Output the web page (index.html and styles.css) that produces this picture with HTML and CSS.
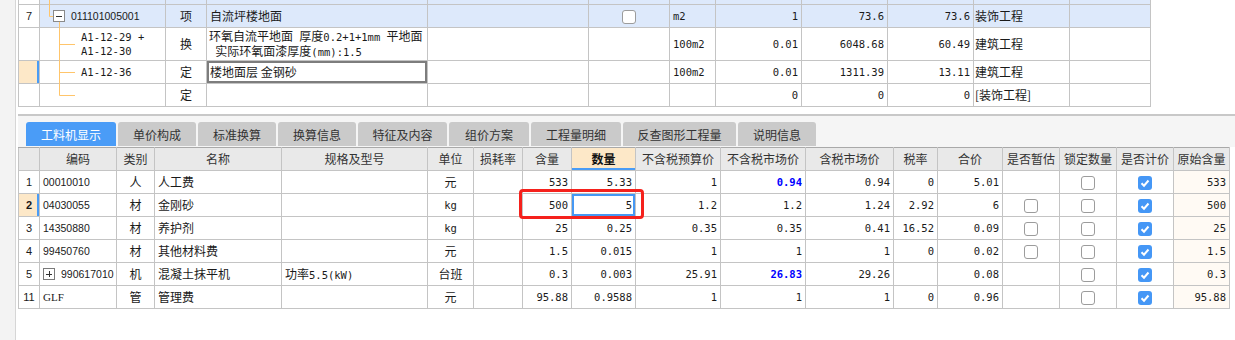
FILE: index.html
```html
<!DOCTYPE html>
<html>
<head>
<meta charset="utf-8">
<link rel="stylesheet" href="styles.css">
</head>
<body>
<div class="app">
  <div class="side"></div>
  <div class="main">
    <div class="top">
      <table class="grid tg">
        <colgroup>
          <col width="21"><col width="126"><col width="41"><col width="221"><col width="161"><col width="81"><col width="46"><col width="86"><col width="86"><col width="86"><col width="96"><col width="81">
        </colgroup>
        <tr class="r0">
          <td></td><td class="sel"></td><td class="sel"></td><td class="sel"></td><td class="sel"></td><td class="sel"></td><td class="sel"></td><td class="sel"></td><td class="sel"></td><td class="sel"></td><td class="sel"></td><td class="sel"></td>
        </tr>
        <tr class="r23">
          <td class="rn">7</td>
          <td class="sel code lv0">011101005001</td>
          <td class="sel c">项</td>
          <td class="sel">自流坪楼地面</td>
          <td class="sel"></td>
          <td class="sel c"><span class="cb"></span></td>
          <td class="sel m">m2</td>
          <td class="sel n">1</td>
          <td class="sel n">73.6</td>
          <td class="sel n">73.6</td>
          <td class="sel cat">装饰工程</td>
          <td class="sel"></td>
        </tr>
        <tr class="r33">
          <td class="rn"></td>
          <td class="m lv1">A1-12-29 +<br>A1-12-30</td>
          <td class="c">换</td>
          <td class="two">环氧自流平地面<span class="m"> </span>厚度<span class="m">0.2+1+1mm </span>平地面<br><span class="m">&nbsp;</span>实际环氧面漆厚度<span class="m">(mm):1.5</span></td>
          <td></td>
          <td></td>
          <td class="m">100m2</td>
          <td class="n">0.01</td>
          <td class="n">6048.68</td>
          <td class="n">60.49</td>
          <td class="cat">建筑工程</td>
          <td></td>
        </tr>
        <tr class="r23">
          <td class="rn cur"></td>
          <td class="m lv1">A1-12-36</td>
          <td class="c">定</td>
          <td class="edit">楼地面层 金钢砂</td>
          <td></td>
          <td></td>
          <td class="m">100m2</td>
          <td class="n">0.01</td>
          <td class="n">1311.39</td>
          <td class="n">13.11</td>
          <td class="cat">建筑工程</td>
          <td></td>
        </tr>
        <tr class="r23">
          <td class="rn"></td>
          <td></td>
          <td class="c">定</td>
          <td></td>
          <td></td>
          <td></td>
          <td></td>
          <td class="n">0</td>
          <td class="n">0</td>
          <td class="n">0</td>
          <td class="cat">[装饰工程]</td>
          <td></td>
        </tr>
      </table>
      <svg class="tree" width="70" height="100" viewBox="0 0 70 100">
        <g stroke="#ffc56b" stroke-width="1" fill="none">
          <path d="M31.5 0 V16.5 H35"/>
          <path d="M41.5 21.5 V95.5"/>
          <path d="M41.5 44.5 H57"/>
          <path d="M41.5 72.5 H57"/>
          <path d="M41.5 95.5 H57"/>
        </g>
        <rect x="35.5" y="10.5" width="11" height="11" fill="#fff" stroke="#8a8a8a"/>
        <path d="M38 16.5 H44" stroke="#333" stroke-width="1"/>
      </svg>
    </div>

    <div class="panel">
      <div class="tab on">工料机显示</div>
      <div class="tab w78">单价构成</div>
      <div class="tab w78">标准换算</div>
      <div class="tab w78">换算信息</div>
      <div class="tab w89">特征及内容</div>
      <div class="tab w80">组价方案</div>
      <div class="tab w90">工程量明细</div>
      <div class="tab w113">反查图形工程量</div>
      <div class="tab w78">说明信息</div>
    </div>

    <div class="bottom">
      <table class="grid bg">
        <colgroup>
          <col width="21"><col width="77"><col width="38"><col width="127"><col width="146"><col width="46"><col width="49"><col width="49"><col width="64"><col width="85"><col width="85"><col width="88"><col width="44"><col width="65"><col width="57"><col width="57"><col width="57"><col width="56">
        </colgroup>
        <tr class="hd">
          <td></td><td>编码</td><td>类别</td><td>名称</td><td>规格及型号</td><td>单位</td><td>损耗率</td><td>含量</td><td class="hq">数量</td><td>不含税预算价</td><td>不含税市场价</td><td>含税市场价</td><td>税率</td><td>合价</td><td>是否暂估</td><td>锁定数量</td><td>是否计价</td><td>原始含量</td>
        </tr>
        <tr class="r23">
          <td class="rn">1</td><td class="code">00010010</td><td class="c">人</td><td>人工费</td><td></td><td class="c">元</td><td></td>
          <td class="n">533</td><td class="n">5.33</td><td class="n">1</td><td class="n blue">0.94</td><td class="n">0.94</td><td class="n">0</td><td class="n">5.01</td>
          <td class="c"></td><td class="c"><span class="cb"></span></td><td class="c"><span class="cb on"><svg width="14" height="14" viewBox="0 0 14 14"><path d="M3.5 7.2 L6 9.7 L10.5 4.5" stroke="#fff" stroke-width="2" fill="none"/></svg></span></td><td class="n orig">533</td>
        </tr>
        <tr class="r23">
          <td class="rn cur b">2</td><td class="code">04030055</td><td class="c">材</td><td>金刚砂</td><td></td><td class="c m">kg</td><td></td>
          <td class="n">500</td><td class="n focus">5</td><td class="n">1.2</td><td class="n">1.2</td><td class="n">1.24</td><td class="n">2.92</td><td class="n">6</td>
          <td class="c"><span class="cb"></span></td><td class="c"><span class="cb"></span></td><td class="c"><span class="cb on"><svg width="14" height="14" viewBox="0 0 14 14"><path d="M3.5 7.2 L6 9.7 L10.5 4.5" stroke="#fff" stroke-width="2" fill="none"/></svg></span></td><td class="n orig">500</td>
        </tr>
        <tr class="r23">
          <td class="rn">3</td><td class="code">14350880</td><td class="c">材</td><td>养护剂</td><td></td><td class="c m">kg</td><td></td>
          <td class="n">25</td><td class="n">0.25</td><td class="n">0.35</td><td class="n">0.35</td><td class="n">0.41</td><td class="n">16.52</td><td class="n">0.09</td>
          <td class="c"><span class="cb"></span></td><td class="c"><span class="cb"></span></td><td class="c"><span class="cb on"><svg width="14" height="14" viewBox="0 0 14 14"><path d="M3.5 7.2 L6 9.7 L10.5 4.5" stroke="#fff" stroke-width="2" fill="none"/></svg></span></td><td class="n orig">25</td>
        </tr>
        <tr class="r23">
          <td class="rn">4</td><td class="code">99450760</td><td class="c">材</td><td>其他材料费</td><td></td><td class="c">元</td><td></td>
          <td class="n">1.5</td><td class="n">0.015</td><td class="n">1</td><td class="n">1</td><td class="n">1</td><td class="n">0</td><td class="n">0.02</td>
          <td class="c"><span class="cb"></span></td><td class="c"><span class="cb"></span></td><td class="c"><span class="cb on"><svg width="14" height="14" viewBox="0 0 14 14"><path d="M3.5 7.2 L6 9.7 L10.5 4.5" stroke="#fff" stroke-width="2" fill="none"/></svg></span></td><td class="n orig">1.5</td>
        </tr>
        <tr class="r23">
          <td class="rn">5</td><td class="code"><span class="pbox"></span>990617010</td><td class="c">机</td><td>混凝土抹平机</td><td>功率<span class="m">5.5(kW)</span></td><td class="c">台班</td><td></td>
          <td class="n">0.3</td><td class="n">0.003</td><td class="n">25.91</td><td class="n blue">26.83</td><td class="n">29.26</td><td class="n"></td><td class="n">0.08</td>
          <td class="c"></td><td class="c"><span class="cb"></span></td><td class="c"><span class="cb on"><svg width="14" height="14" viewBox="0 0 14 14"><path d="M3.5 7.2 L6 9.7 L10.5 4.5" stroke="#fff" stroke-width="2" fill="none"/></svg></span></td><td class="n orig">0.3</td>
        </tr>
        <tr class="r23">
          <td class="rn">11</td><td class="code serif">GLF</td><td class="c">管</td><td>管理费</td><td></td><td class="c">元</td><td></td>
          <td class="n">95.88</td><td class="n">0.9588</td><td class="n">1</td><td class="n">1</td><td class="n">1</td><td class="n">0</td><td class="n">0.96</td>
          <td class="c"></td><td class="c"><span class="cb"></span></td><td class="c"><span class="cb on"><svg width="14" height="14" viewBox="0 0 14 14"><path d="M3.5 7.2 L6 9.7 L10.5 4.5" stroke="#fff" stroke-width="2" fill="none"/></svg></span></td><td class="n orig">95.88</td>
        </tr>
      </table>
      <div class="hl"></div>
    </div>
  </div>
</div>
</body>
</html>
```

FILE: styles.css
```css
html, body {
  margin: 0;
  padding: 0;
  background: #fff;
}
.app {
  display: flex;
  width: 1235px;
  height: 340px;
  overflow: hidden;
}
.side {
  width: 15px;
  flex: none;
  background: #f3f3f3;
  border-right: 1px solid #d6d6d6;
}
.main {
  flex: 1;
  margin-left: 2px;
  display: flex;
  flex-direction: column;
}
.top {
  position: relative;
  height: 114px;
  border-bottom: 2px solid #c8c8c8;
}
.grid {
  border-collapse: collapse;
  table-layout: fixed;
  font-family: "Noto Sans CJK SC", sans-serif;
  font-size: 12px;
  color: #1a1a1a;
}
.tg { width: 1133px; }
.bg { width: 1212px; }
.grid td {
  border: 1px solid #c4c4c4;
  padding: 0 3px;
  white-space: nowrap;
  overflow: hidden;
  line-height: 14px;
  vertical-align: middle;
}
.tg tr.r0 td {
  border-top: none;
  height: 4px;
  padding: 0;
  font-size: 0;
  line-height: 0;
}
tr.r23 { height: 23px; }
tr.r33 { height: 33px; }
.sel { background: #dde9fb; }
.c { text-align: center; }
.n {
  text-align: right;
  font-family: "DejaVu Sans Mono", monospace;
  font-size: 10.5px;
}
.m {
  font-family: "DejaVu Sans Mono", monospace;
  font-size: 10.5px;
}
.code {
  font-family: "Liberation Sans", sans-serif;
  font-size: 10.5px;
}
.serif { font-family: "Liberation Serif", serif; font-size: 11px; }
.rn {
  text-align: center;
  font-family: "Liberation Sans", sans-serif;
  font-size: 11px;
  padding: 0 !important;
}
.cur {
  background: #fde8c8;
  box-shadow: inset -2px 0 0 #4a9cf5;
}
.b { font-weight: bold; }
.lv0 { padding-left: 31px !important; }
.lv1 { padding-left: 41px !important; }
.cat { padding-left: 1px !important; }
.two { padding-left: 2px !important; }
.edit { box-shadow: inset 0 0 0 2px #7d7d7d; }
.tree {
  position: absolute;
  left: 0;
  top: 0;
  pointer-events: none;
}
.cb {
  display: inline-block;
  width: 12px;
  height: 12px;
  border: 1px solid #9c9c9c;
  border-radius: 3px;
  background: #fff;
  vertical-align: middle;
}
.cb.on {
  width: 14px;
  height: 14px;
  border: none;
  background: #4597f6;
  position: relative;
}
.cb.on svg { display: block; }
.blue { color: #0000ff; font-weight: bold; }
.orig { background: #fffaf4; }
.focus { box-shadow: inset 0 0 0 2px #4598f4; }
.pbox {
  display: inline-block;
  width: 10px;
  height: 10px;
  border: 1px solid #7a7a7a;
  vertical-align: -2px;
  margin-right: 6px;
  position: relative;
}
.pbox::before, .pbox::after {
  content: "";
  position: absolute;
  background: #333;
}
.pbox::before { left: 2px; right: 2px; top: 4.5px; height: 1px; }
.pbox::after { top: 2px; bottom: 2px; left: 4.5px; width: 1px; }

.panel {
  height: 31px;
  box-sizing: border-box;
  background: #f5f5f5;
  padding: 6px 0 1px 8px;
  display: flex;
  gap: 2px;
  align-items: stretch;
}
.tab {
  width: 78px;
  box-sizing: border-box;
  background: #cacaca;
  border-radius: 3px 3px 0 0;
  font-family: "Noto Sans CJK SC", sans-serif;
  font-size: 12px;
  color: #333;
  display: flex;
  align-items: center;
  justify-content: center;
}
.tab.on {
  width: 90px;
  background: #4a9cf7;
  color: #fff;
}
.w89 { width: 89px; }
.w80 { width: 80px; }
.w90 { width: 90px; }
.w113 { width: 113px; }

.bottom {
  position: relative;
}
.bg tr.hd { height: 23px; }
.bg tr.hd td {
  background: #e9e9e9;
  border-top: 1px solid #a9a9a9;
  text-align: center;
  color: #333;
  padding: 0;
}
.bg tr.hd td.hq {
  background: #fde8c8;
  font-weight: bold;
  color: #111;
  box-shadow: inset 0 -2px 0 #4a9cf5;
}
.hl {
  position: absolute;
  left: 501px;
  top: 42px;
  width: 125px;
  height: 30px;
  box-sizing: border-box;
  border: 3px solid #f5211c;
  border-radius: 4px;
  pointer-events: none;
}
```
